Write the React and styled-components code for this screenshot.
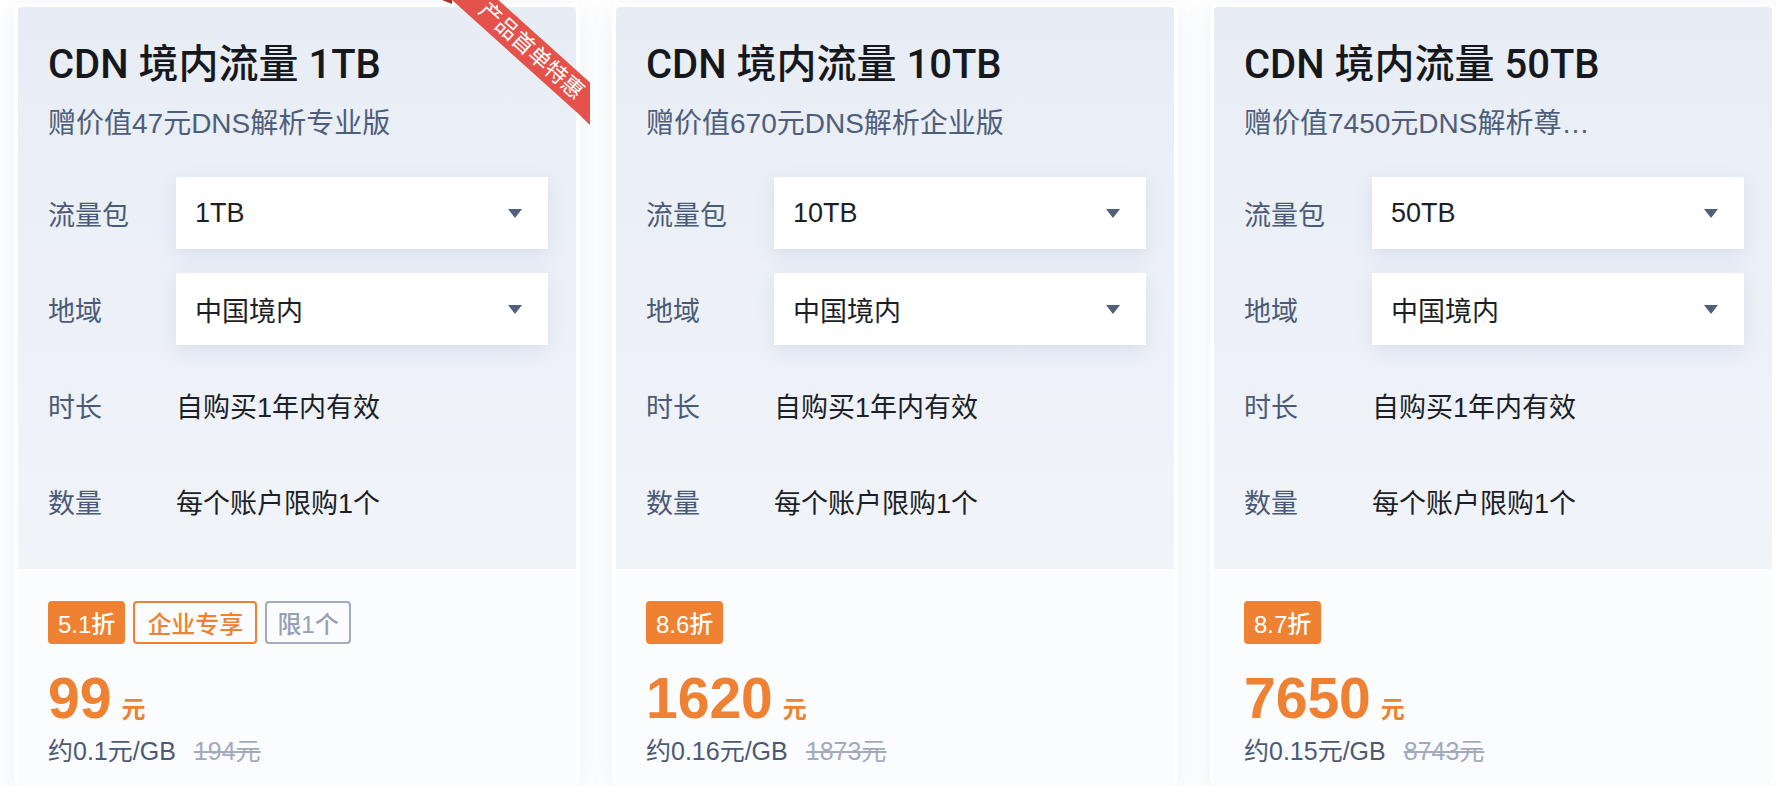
import React from "react";
import styled, { createGlobalStyle, css } from "styled-components";

const GlobalStyle = createGlobalStyle`
  html, body {
    margin: 0;
    padding: 0;
    background: #ffffff;
    overflow: hidden;
  }
  body {
    font-family: "Liberation Sans", "Noto Sans CJK SC", sans-serif;
    -webkit-font-smoothing: antialiased;
  }
  * { box-sizing: border-box; }
`;

const Page = styled.div`
  display: flex;
  gap: 32px;
  padding: 3px 0 0 14px;
  width: 1776px;
  height: 786px;
  overflow: hidden;
`;

const Card = styled.div`
  position: relative;
  flex: none;
  width: 566px;
  border: 4px solid #ffffff;
  border-radius: 8px;
  background: #ffffff;
  box-shadow: 0 6px 28px rgba(60, 90, 150, 0.1);
`;

const Upper = styled.div`
  padding: 32px 28px 32px 30px;
  border-radius: 4px 4px 0 0;
  background: linear-gradient(180deg, #e8edf5 0%, #f1f4f9 100%);
`;

const Title = styled.div`
  font-family: "Roboto", "Noto Sans CJK SC", sans-serif;
  font-size: 40px;
  line-height: 52px;
  font-weight: 500;
  color: #16181d;
  white-space: nowrap;
`;

const Subtitle = styled.div`
  margin-top: 13px;
  font-size: 28px;
  line-height: 40px;
  color: #4e5d7a;
  white-space: nowrap;
  overflow: hidden;
  text-overflow: ellipsis;
`;

const Rows = styled.div`
  margin-top: 33px;
  display: flex;
  flex-direction: column;
  gap: 24px;
`;

const Row = styled.div`
  display: grid;
  grid-template-columns: 128px 1fr;
  align-items: center;
  height: 72px;
`;

const Label = styled.div`
  font-size: 27px;
  color: #4b5a76;
  white-space: nowrap;
`;

const Value = styled.div`
  font-size: 27px;
  color: #1c1f25;
  white-space: nowrap;
`;

const Select = styled.div`
  display: flex;
  align-items: center;
  justify-content: space-between;
  height: 72px;
  padding: 0 26px 0 19px;
  background: #ffffff;
  font-size: 27px;
  color: #1c1f25;
  box-shadow: 0 6px 18px rgba(90, 115, 170, 0.14);
`;

const Caret = styled.span`
  width: 0;
  height: 0;
  border-left: 7.5px solid transparent;
  border-right: 7.5px solid transparent;
  border-top: 9px solid #50607a;
`;

const Lower = styled.div`
  padding: 32px 30px 40px;
  background: #fbfcfe;
  border-radius: 0 0 4px 4px;
`;

const Tags = styled.div`
  display: flex;
  gap: 8px;
`;

const tagVariants = {
  solid: css`
    background: #ef8132;
    border-color: #ef8132;
    color: #ffffff;
    padding: 0 8px;
  `,
  outline: css`
    background: transparent;
    border-color: #ef8132;
    color: #ef8132;
  `,
  muted: css`
    background: transparent;
    border-color: #a3abbe;
    color: #97a0b3;
    padding: 0 10px;
  `,
};

const Tag = styled.span`
  display: inline-flex;
  align-items: center;
  height: 43px;
  padding: 0 12px;
  border: 2px solid;
  border-radius: 4px;
  font-size: 24px;
  font-weight: 500;
  white-space: nowrap;
  ${(p) => tagVariants[p.$variant]}
`;

const PriceRow = styled.div`
  margin-top: 24px;
  display: flex;
  align-items: baseline;
  height: 60px;
  color: #ef8132;
`;

const Amount = styled.span`
  font-size: 57px;
  line-height: 60px;
  font-weight: 700;
`;

const Unit = styled.span`
  margin-left: 10px;
  font-size: 24px;
  font-weight: 700;
`;

const UnitPrice = styled.div`
  margin-top: 5px;
  display: flex;
  align-items: baseline;
  gap: 18px;
  font-size: 25px;
  line-height: 36px;
  white-space: nowrap;
`;

const Per = styled.span`
  color: #4c5975;
`;

const Original = styled.span`
  color: #a2aabb;
  text-decoration: line-through;
`;

const RibbonBox = styled.div`
  position: absolute;
  top: -7px;
  right: -14px;
  width: 138px;
  height: 124px;
  pointer-events: none;
  z-index: 2;
`;

const FoldTop = styled.span`
  position: absolute;
  top: 0;
  left: -10px;
  width: 0;
  height: 0;
  border-top: 4px solid #a8312c;
  border-left: 10px solid transparent;
`;

const FoldRight = styled.span`
  position: absolute;
  top: 117px;
  right: 0;
  width: 0;
  height: 0;
  border-top: 8px solid #a8312c;
  border-left: 8px solid transparent;
`;

const RibbonClip = styled.div`
  position: absolute;
  inset: 0;
  overflow: hidden;
`;

const RibbonBand = styled.div`
  position: absolute;
  left: 0;
  top: -31px;
  width: 186px;
  height: 31px;
  transform-origin: 0 100%;
  transform: rotate(42deg);
  background: #e5524b;
  color: #ffffff;
  font-size: 22px;
  line-height: 31px;
  text-align: center;
  white-space: nowrap;
`;

const cards = [
  {
    title: "CDN 境内流量 1TB",
    gift: "赠价值47元DNS解析专业版",
    pkg: "1TB",
    tags: [
      { text: "5.1折", variant: "solid" },
      { text: "企业专享", variant: "outline" },
      { text: "限1个", variant: "muted" },
    ],
    price: "99",
    per: "约0.1元/GB",
    orig: "194元",
    ribbon: "产品首单特惠",
  },
  {
    title: "CDN 境内流量 10TB",
    gift: "赠价值670元DNS解析企业版",
    pkg: "10TB",
    tags: [{ text: "8.6折", variant: "solid" }],
    price: "1620",
    per: "约0.16元/GB",
    orig: "1873元",
  },
  {
    title: "CDN 境内流量 50TB",
    gift: "赠价值7450元DNS解析尊…",
    pkg: "50TB",
    tags: [{ text: "8.7折", variant: "solid" }],
    price: "7650",
    per: "约0.15元/GB",
    orig: "8743元",
  },
];

function Ribbon({ text }) {
  return (
    <RibbonBox>
      <FoldTop />
      <FoldRight />
      <RibbonClip>
        <RibbonBand>{text}</RibbonBand>
      </RibbonClip>
    </RibbonBox>
  );
}

function ProductCard({ card }) {
  return (
    <Card>
      <Upper>
        <Title>{card.title}</Title>
        <Subtitle>{card.gift}</Subtitle>
        <Rows>
          <Row>
            <Label>流量包</Label>
            <Select>
              <span>{card.pkg}</span>
              <Caret />
            </Select>
          </Row>
          <Row>
            <Label>地域</Label>
            <Select>
              <span>中国境内</span>
              <Caret />
            </Select>
          </Row>
          <Row>
            <Label>时长</Label>
            <Value>自购买1年内有效</Value>
          </Row>
          <Row>
            <Label>数量</Label>
            <Value>每个账户限购1个</Value>
          </Row>
        </Rows>
      </Upper>
      <Lower>
        <Tags>
          {card.tags.map((t) => (
            <Tag key={t.text} $variant={t.variant}>
              {t.text}
            </Tag>
          ))}
        </Tags>
        <PriceRow>
          <Amount>{card.price}</Amount>
          <Unit>元</Unit>
        </PriceRow>
        <UnitPrice>
          <Per>{card.per}</Per>
          <Original>{card.orig}</Original>
        </UnitPrice>
      </Lower>
      {card.ribbon && <Ribbon text={card.ribbon} />}
    </Card>
  );
}

export default function App() {
  return (
    <>
      <GlobalStyle />
      <Page>
        {cards.map((c) => (
          <ProductCard key={c.title} card={c} />
        ))}
      </Page>
    </>
  );
}
